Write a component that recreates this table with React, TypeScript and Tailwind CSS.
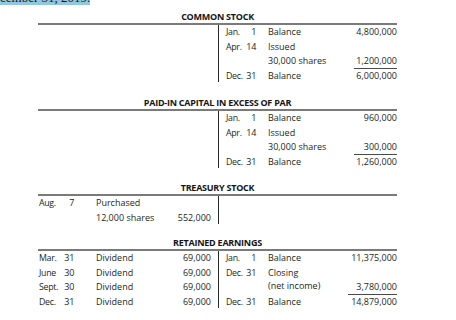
import React from "react";

type Row = { m?: string; d?: string; desc?: string; amt?: string; under?: boolean; raise?: boolean };

const font = { fontFamily: '"Open Sans", "Noto Sans", sans-serif' };

function Side({ rows, side, ulw }: { rows: Row[]; side: "L" | "R"; ulw: string }) {
  return (
    <div className="flex flex-col">
      {rows.map((r, i) => (
        <div
          key={i}
          className={
            side === "L"
              ? "flex h-[14.5px] leading-[14.5px] pl-[1px] pr-[7px]"
              : "flex h-[14.5px] leading-[14.5px] pl-[7px]"
          }
        >
          <div className={side === "L" ? "flex w-[35px] justify-between" : "flex w-[30px] justify-between"}>
            <span className="text-[8.8px] tracking-[-0.3px]">{r.m}</span>
            <span className="tracking-[-0.3px]">{r.d}</span>
          </div>
          <div className={side === "L" ? "ml-[22px] whitespace-nowrap" : "ml-[12px] whitespace-nowrap"}>
            <span className={r.raise ? "block leading-[11px]" : ""}>{r.desc}</span>
          </div>
          <div className="flex flex-1 justify-end">
            {r.under ? (
              <span className={`${ulw} block text-right leading-[13.5px] border-b border-[#4a4a4a]`}>{r.amt}</span>
            ) : (
              <span>{r.amt}</span>
            )}
          </div>
        </div>
      ))}
    </div>
  );
}

function TAccount({
  title,
  left,
  right,
  mt,
  ulw,
}: {
  title: string;
  left: Row[];
  right: Row[];
  mt: string;
  ulw: string;
}) {
  return (
    <div className={mt}>
      <div className="h-[12px] leading-[12px] text-center text-[9px] font-bold text-[#141414] tracking-[-0.25px]">
        {title}
      </div>
      <div className="h-[2px] bg-[#7a7a7a]" />
      <div className="flex text-[9px] text-[#231f20]">
        <div className="w-[180px]">
          <Side rows={left} side="L" ulw={ulw} />
        </div>
        <div className="w-[1px] bg-[#2a2a2a] mb-[1px]" />
        <div className="flex-1">
          <Side rows={right} side="R" ulw={ulw} />
        </div>
      </div>
    </div>
  );
}

export default function App() {
  return (
    <div className="w-[456px] h-[320px] bg-white overflow-hidden" style={font}>
      <div className="h-[5px] overflow-hidden">
        <div
          className="-mt-[10px] text-[13px] leading-[15px] text-[#1a1a1a]"
          style={{ fontFamily: '"Liberation Serif", "Times New Roman", serif' }}
        >
          <span className="bg-[#93c6df]">cember 31, 2019.</span>
        </div>
      </div>
      <div className="ml-[38px] w-[359px]">
        <TAccount
          title="COMMON STOCK"
          mt="mt-[6px]"
          ulw="w-[43px]"
          left={[]}
          right={[
            { m: "Jan.", d: "1", desc: "Balance", amt: "4,800,000" },
            { m: "Apr.", d: "14", desc: "Issued" },
            { desc: "30,000 shares", amt: "1,200,000", under: true },
            { m: "Dec.", d: "31", desc: "Balance", amt: "6,000,000" },
          ]}
        />
        <TAccount
          title="PAID-IN CAPITAL IN EXCESS OF PAR"
          mt="mt-[14px]"
          ulw="w-[43px]"
          left={[]}
          right={[
            { m: "Jan.", d: "1", desc: "Balance", amt: "960,000" },
            { m: "Apr.", d: "14", desc: "Issued" },
            { desc: "30,000 shares", amt: "300,000", under: true },
            { m: "Dec.", d: "31", desc: "Balance", amt: "1,260,000" },
          ]}
        />
        <TAccount
          title="TREASURY STOCK"
          mt="mt-[13px]"
          ulw="w-[43px]"
          left={[
            { m: "Aug.", d: "7", desc: "Purchased" },
            { desc: "12,000 shares", amt: "552,000" },
          ]}
          right={[]}
        />
        <TAccount
          title="RETAINED EARNINGS"
          mt="mt-[12px]"
          ulw="w-[49px]"
          left={[
            { m: "Mar.", d: "31", desc: "Dividend", amt: "69,000" },
            { m: "June", d: "30", desc: "Dividend", amt: "69,000" },
            { m: "Sept.", d: "30", desc: "Dividend", amt: "69,000" },
            { m: "Dec.", d: "31", desc: "Dividend", amt: "69,000" },
          ]}
          right={[
            { m: "Jan.", d: "1", desc: "Balance", amt: "11,375,000" },
            { m: "Dec.", d: "31", desc: "Closing" },
            { desc: "(net income)", amt: "3,780,000", under: true, raise: true },
            { m: "Dec.", d: "31", desc: "Balance", amt: "14,879,000" },
          ]}
        />
      </div>
    </div>
  );
}
